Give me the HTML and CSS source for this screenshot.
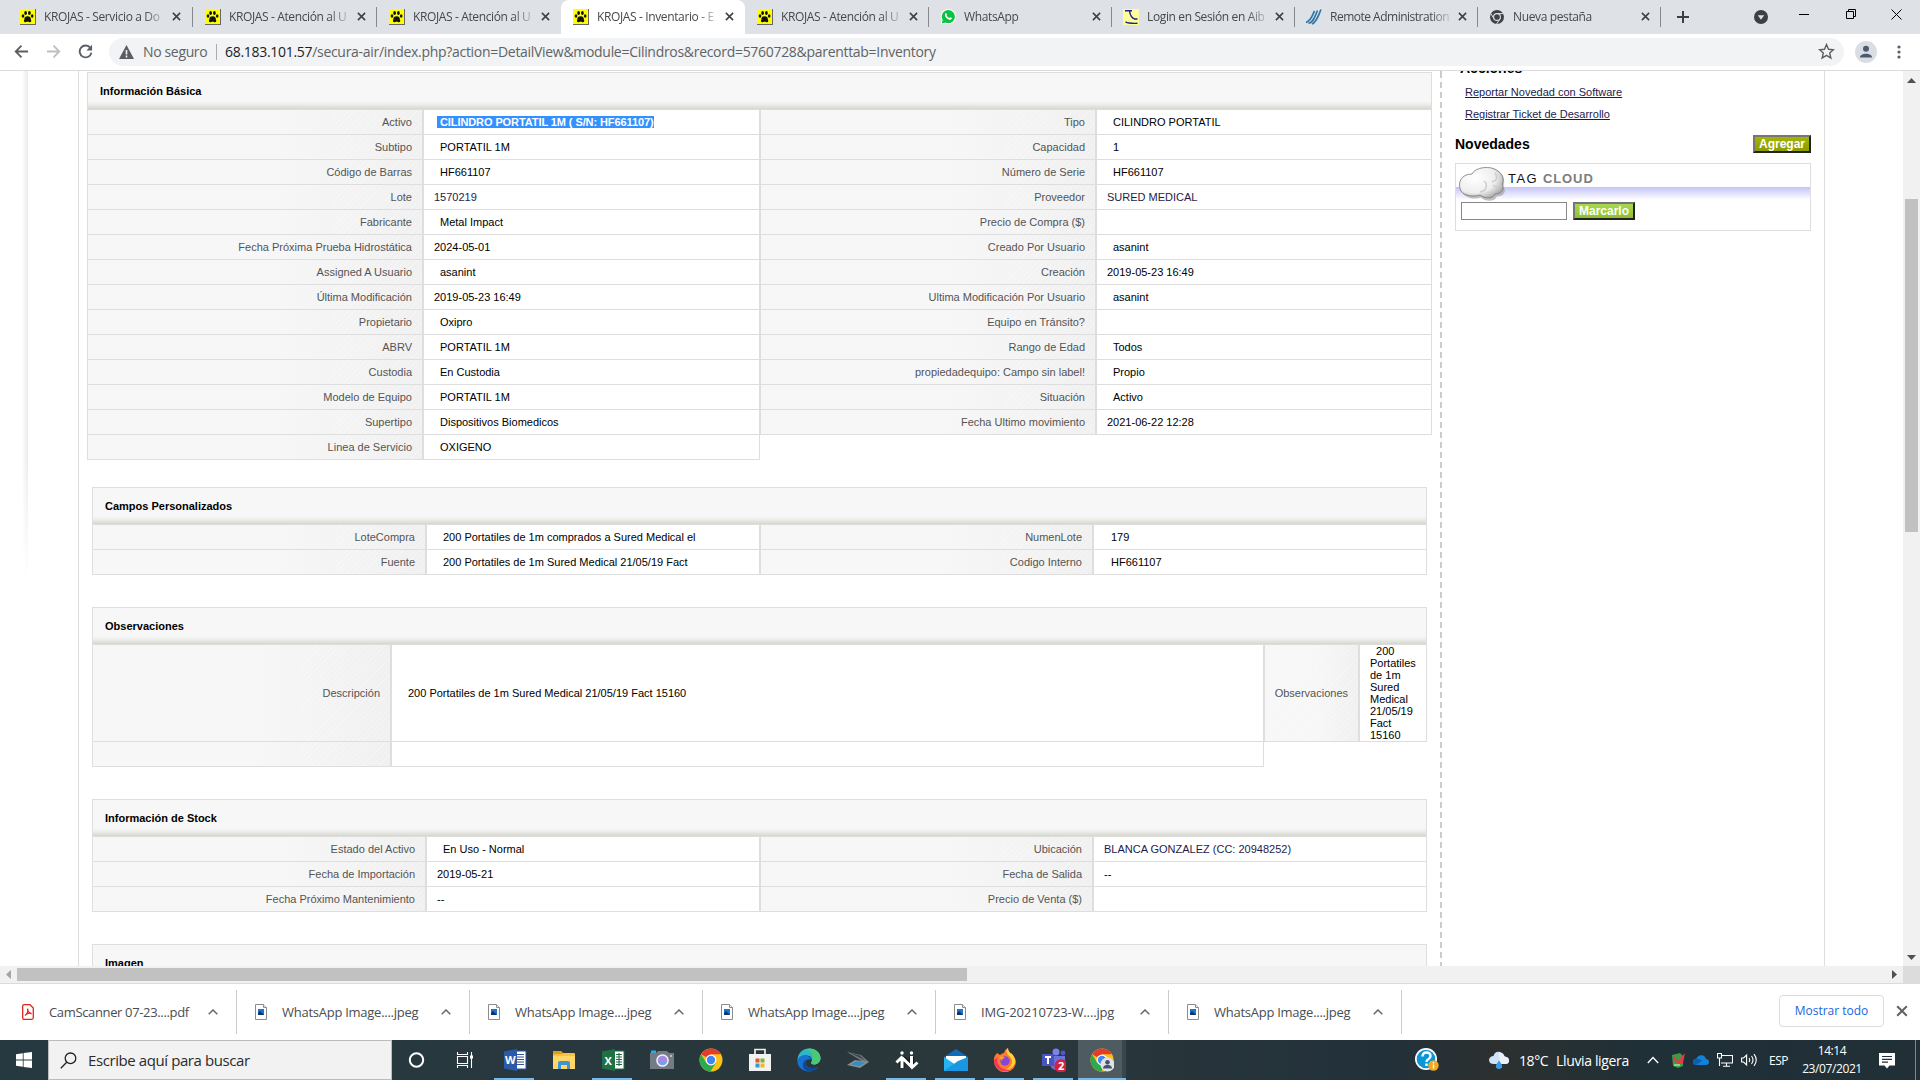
FILE: index.html
```html
<!DOCTYPE html>
<html lang="es">
<head>
<meta charset="utf-8">
<title>KROJAS - Inventario</title>
<link rel="stylesheet" href="styles.css">
</head>
<body>
<svg class="defs" width="0" height="0">
  <symbol id="paw" viewBox="0 0 16 16"><rect width="16" height="16" fill="#666"/><rect x="0" y="0" width="15" height="15" fill="#ff0"/><g fill="#111"><ellipse cx="7.6" cy="10" rx="3.2" ry="2.8"/><ellipse cx="5.6" cy="4" rx="1.4" ry="2"/><ellipse cx="9.4" cy="3.9" rx="1.4" ry="2"/><ellipse cx="3" cy="7" rx="1.3" ry="1.8"/><ellipse cx="12.2" cy="7" rx="1.3" ry="1.8"/><circle cx="5.4" cy="11.8" r="1.5"/><circle cx="9.8" cy="11.8" r="1.5"/></g></symbol>
  <symbol id="x" viewBox="0 0 10 10"><path d="M1 1l8 8M9 1l-8 8" stroke="currentColor" stroke-width="1.7" fill="none"/></symbol>
  <symbol id="up" viewBox="0 0 10 6"><path d="M.7 5.3L5 1l4.300 4.300" stroke="currentColor" stroke-width="1.600" fill="none"/></symbol>
  <symbol id="img" viewBox="0 0 12 16"><path d="M.5.5h8l3 3v12H.5z" fill="#fff" stroke="#8c8c8c"/><path d="M8.5.5v3h3" fill="#eee" stroke="#8c8c8c"/><rect x="3" y="5" width="6" height="6" fill="#1976d2"/><path d="M3 11V9l2-2 4 4z" fill="#0b3566"/></symbol>
  <symbol id="chrome" viewBox="0 0 24 24"><circle cx="12" cy="12" r="11.5" fill="#fbc116"/><path d="M12 12L2.1 6.2A11.5 11.5 0 0 1 22 6.3H12z" fill="#e33b2e"/><path d="M2.1 6.2A11.5 11.5 0 0 0 11.4 23.5L16.9 14.8 12 12 7.2 14.8z" fill="#2da94f"/><circle cx="12" cy="12" r="5.4" fill="#fff"/><circle cx="12" cy="12" r="4.2" fill="#4285f4"/></symbol>
</svg>

<header class="tabs">
  <div class="tab"><svg class="fav"><use href="#paw"/></svg><span class="tt">KROJAS - Servicio a Do</span><svg class="cl"><use href="#x"/></svg></div>
  <div class="tab"><svg class="fav"><use href="#paw"/></svg><span class="tt">KROJAS - Atención al U</span><svg class="cl"><use href="#x"/></svg></div>
  <div class="tab nosep"><svg class="fav"><use href="#paw"/></svg><span class="tt">KROJAS - Atención al U</span><svg class="cl"><use href="#x"/></svg></div>
  <div class="tab active"><svg class="fav"><use href="#paw"/></svg><span class="tt">KROJAS - Inventario - E</span><svg class="cl"><use href="#x"/></svg></div>
  <div class="tab"><svg class="fav"><use href="#paw"/></svg><span class="tt">KROJAS - Atención al U</span><svg class="cl"><use href="#x"/></svg></div>
  <div class="tab narrow"><svg class="fav" viewBox="0 0 16 16"><circle cx="8.3" cy="7.7" r="7.6" fill="#fff"/><path d="M.6 15.6l1-4 3 3z" fill="#fff"/><circle cx="8.3" cy="7.7" r="6.6" fill="#0cc143"/><path d="M1.8 14.4l1-3.6 2.6 2.6z" fill="#0cc143"/><path d="M5.2 4.6c.6-.8 1.3-.5 1.6.4.4 1 0 1.2-.2 1.6.7 1.3 1.7 2.1 2.8 2.4.6-.7.9-1 1.5-.6 1.3.6 1.2.9.7 1.7-.9 1.100-2.300 1-4 0C5.500 8.700 4.300 6.300 5.200 4.600z" fill="#fff"/></svg><span class="tt">WhatsApp</span><svg class="cl"><use href="#x"/></svg></div>
  <div class="tab narrow"><svg class="fav" viewBox="0 0 16 16"><rect width="16" height="16" fill="#ffff99"/><path d="M2 1.800h7M6.500 1.800c.5 4 2 7 5.500 8.400M11 10h3.500M2.500 12.800c2 1.200 7 1.700 12 1.500" stroke="#22228c" stroke-width="1.400" fill="none"/></svg><span class="tt">Login en Sesión en Aib</span><svg class="cl"><use href="#x"/></svg></div>
  <div class="tab narrow"><svg class="fav" viewBox="0 0 16 16"><path d="M0 13.500C5 12 6 7 8.500 2M2.500 14.500C8 13 9 7 11.500 1.500M6 15C11 13 12 7 15 .5" stroke="#2f78a8" stroke-width="1.700" fill="none"/></svg><span class="tt wide">Remote Administration</span><svg class="cl"><use href="#x"/></svg></div>
  <div class="tab narrow"><svg class="fav" viewBox="0 0 16 16"><circle cx="8" cy="8" r="7" fill="#3f4347"/><circle cx="8" cy="8" r="3.4" fill="none" stroke="#dee1e6" stroke-width="1.1"/><path d="M8 4.600h7M5 9.700L1.600 4.200M11 9.700L7.600 15" stroke="#dee1e6" stroke-width="1"/></svg><span class="tt">Nueva pestaña</span><svg class="cl"><use href="#x"/></svg></div>
  <svg class="plus" viewBox="0 0 14 14"><path d="M7 1v12M1 7h12" stroke="#3c4043" stroke-width="2"/></svg>
  <div class="wins">
    <svg width="14" height="14" viewBox="0 0 14 14"><circle cx="7" cy="7" r="7" fill="#3c4043"/><path d="M3.800 5.200h6.400L7 9.800z" fill="#dee1e6"/></svg>
    <svg width="10" height="10" viewBox="0 0 10 10"><path d="M0 4.500h10" stroke="#000"/></svg>
    <svg width="10" height="10" viewBox="0 0 10 10"><path d="M.5 2.500h7v7h-7zM2.500 2.500v-2h7v7h-2" fill="none" stroke="#000"/></svg>
    <svg width="11" height="11" viewBox="0 0 11 11"><path d="M.5.5l10 10M10.500.5l-10 10" stroke="#000"/></svg>
  </div>
</header>

<div class="toolbar">
  <svg class="nav" viewBox="0 0 16 16"><path d="M15 8H2M8 1.800L1.800 8 8 14.200" stroke="#5a5e63" stroke-width="1.900" fill="none"/></svg>
  <svg class="nav" viewBox="0 0 16 16"><path d="M1 8h13M8 1.800L14.200 8 8 14.200" stroke="#bcbfc3" stroke-width="1.900" fill="none"/></svg>
  <svg class="nav" viewBox="0 0 16 16"><path d="M13.200 4.200A6.300 6.300 0 1 0 14.300 9.200" stroke="#5a5e63" stroke-width="2" fill="none"/><path d="M15 .8v6H9z" fill="#5a5e63"/></svg>
  <div class="omni">
    <svg width="15" height="14" viewBox="0 0 15 14"><path d="M7.500 0L15 14H0z" fill="#5a5e63"/><path d="M7.500 5v4.500M7.500 10.500v2" stroke="#f1f3f4" stroke-width="1.600"/></svg>
    <span class="ns">No seguro</span><i></i><span class="url"><b>68.183.101.57</b>/secura-air/index.php?action=DetailView&amp;module=Cilindros&amp;record=5760728&amp;parenttab=Inventory</span>
    <svg class="star" viewBox="0 0 16 16"><path d="M8 1.500l1.900 4.400 4.700.4-3.600 3.100 1.100 4.700L8 11.600l-4.100 2.500L5 9.400 1.400 6.300l4.700-.4z" fill="none" stroke="#5a5e63" stroke-width="1.300"/></svg>
  </div>
  <svg class="prof" viewBox="0 0 22 22"><circle cx="11" cy="11" r="11" fill="#dadee3"/><circle cx="11" cy="7.800" r="3" fill="#4a5a70"/><path d="M5 16.500c0-5 12-5 12 0z" fill="#4a5a70"/></svg>
  <svg class="dots" viewBox="0 0 4 14"><g fill="#5a5e63"><circle cx="2" cy="2" r="1.600"/><circle cx="2" cy="7" r="1.600"/><circle cx="2" cy="12" r="1.600"/></g></svg>
</div>

<main class="view">
  <div class="gutter"></div>
  <div class="page">
    <div class="detail">
      <section class="blk first">
        <h2>Información Básica</h2>
        <div class="row"><div class="l">Activo</div><div class="v"><b class="sel">&nbsp;CILINDRO PORTATIL 1M ( S/N: HF661107)</b></div><div class="l">Tipo</div><div class="v p">CILINDRO PORTATIL</div></div>
        <div class="row"><div class="l">Subtipo</div><div class="v p">PORTATIL 1M</div><div class="l">Capacidad</div><div class="v p">1</div></div>
        <div class="row"><div class="l">Código de Barras</div><div class="v p">HF661107</div><div class="l">Número de Serie</div><div class="v p">HF661107</div></div>
        <div class="row"><div class="l">Lote</div><div class="v a">1570219</div><div class="l">Proveedor</div><div class="v a">SURED MEDICAL</div></div>
        <div class="row"><div class="l">Fabricante</div><div class="v p">Metal Impact</div><div class="l">Precio de Compra ($)</div><div class="v"></div></div>
        <div class="row"><div class="l">Fecha Próxima Prueba Hidrostática</div><div class="v">2024-05-01</div><div class="l">Creado Por Usuario</div><div class="v p">asanint</div></div>
        <div class="row"><div class="l">Assigned A Usuario</div><div class="v p">asanint</div><div class="l">Creación</div><div class="v">2019-05-23 16:49</div></div>
        <div class="row"><div class="l">Última Modificación</div><div class="v">2019-05-23 16:49</div><div class="l">Ultima Modificación Por Usuario</div><div class="v p">asanint</div></div>
        <div class="row"><div class="l">Propietario</div><div class="v p">Oxipro</div><div class="l">Equipo en Tránsito?</div><div class="v"></div></div>
        <div class="row"><div class="l">ABRV</div><div class="v p">PORTATIL 1M</div><div class="l">Rango de Edad</div><div class="v p">Todos</div></div>
        <div class="row"><div class="l">Custodia</div><div class="v p">En Custodia</div><div class="l">propiedadequipo: Campo sin label!</div><div class="v p">Propio</div></div>
        <div class="row"><div class="l">Modelo de Equipo</div><div class="v p">PORTATIL 1M</div><div class="l">Situación</div><div class="v p">Activo</div></div>
        <div class="row"><div class="l">Supertipo</div><div class="v p">Dispositivos Biomedicos</div><div class="l">Fecha Ultimo movimiento</div><div class="v">2021-06-22 12:28</div></div>
        <div class="row"><div class="l">Linea de Servicio</div><div class="v p">OXIGENO</div></div>
      </section>
      <section class="blk custom">
        <h2>Campos Personalizados</h2>
        <div class="row"><div class="l">LoteCompra</div><div class="v p">200 Portatiles de 1m comprados a Sured Medical el</div><div class="l">NumenLote</div><div class="v p">179</div></div>
        <div class="row"><div class="l">Fuente</div><div class="v p">200 Portatiles de 1m Sured Medical 21/05/19 Fact</div><div class="l">Codigo Interno</div><div class="v p">HF661107</div></div>
      </section>
      <section class="blk obs">
        <h2>Observaciones</h2>
        <div class="row tall"><div class="l">Descripción</div><div class="v p">200 Portatiles de 1m Sured Medical 21/05/19 Fact 15160</div><div class="l">Observaciones</div><div class="v"><p>&nbsp; 200<br>Portatiles<br>de 1m<br>Sured<br>Medical<br>21/05/19<br>Fact<br>15160</p></div></div>
        <div class="row"><div class="l"></div><div class="v"></div></div>
      </section>
      <section class="blk stock">
        <h2>Información de Stock</h2>
        <div class="row"><div class="l">Estado del Activo</div><div class="v p">En Uso - Normal</div><div class="l">Ubicación</div><div class="v a">BLANCA GONZALEZ (CC: 20948252)</div></div>
        <div class="row"><div class="l">Fecha de Importación</div><div class="v">2019-05-21</div><div class="l">Fecha de Salida</div><div class="v">--</div></div>
        <div class="row"><div class="l">Fecha Próximo Mantenimiento</div><div class="v">--</div><div class="l">Precio de Venta ($)</div><div class="v"></div></div>
      </section>
      <section class="blk image"><h2>Imagen</h2></section>
    </div>
    <div class="dash"></div>
    <aside>
      <h3 class="acc">Acciones</h3>
      <a>Reportar Novedad con Software</a>
      <a>Registrar Ticket de Desarrollo</a>
      <div class="nov"><h3>Novedades</h3><button class="olive">Agregar</button></div>
      <div class="cloud">
        <div class="ch">
          <svg width="48" height="34" viewBox="0 0 48 34"><defs><radialGradient id="cg" cx=".35" cy=".35" r=".8"><stop offset="0" stop-color="#fff"/><stop offset=".6" stop-color="#eee"/><stop offset="1" stop-color="#999"/></radialGradient></defs><path d="M4 25C-1 17 3 8 14 8 17 1 33-2 40 4 46 8 46 15 44 18 48 22 45 28 38 28 36 33 27 34 22 29 16 31 7 30 4 25z" fill="#999" transform="translate(1 1.500)" opacity=".6"/><path d="M3 24C-1 16 3 7 14 7 17 0 33-2 40 4 46 8 46 14 44 17 47 21 44 27 37 27 35 32 27 32 22 28 16 30 6 29 3 24z" fill="url(#cg)" stroke="#777" stroke-width=".8"/><path d="M22 25c7-1 8-8 4-11M37 6c3 4 2 8-3 9M35 18c3 3 6 2 7 0" stroke="#ccc" stroke-width="1.500" fill="none"/></svg>
          <span>TAG</span><b>CLOUD</b>
        </div>
        <div class="cf"><input type="text"><button class="lime">Marcarlo</button></div>
      </div>
    </aside>
  </div>
  <div class="vs"><svg width="9" height="5"><path d="M0 5l4.500-5L9 5z" fill="#505050"/></svg><div class="thumb"></div><svg class="dn" width="9" height="5"><path d="M0 0l4.500 5L9 0z" fill="#505050"/></svg></div>
</main>
<div class="hs"><svg width="5" height="9"><path d="M5 0L0 4.500 5 9z" fill="#a3a3a3"/></svg><div class="ht"></div><svg class="rt" width="5" height="9"><path d="M0 0l5 4.500L0 9z" fill="#505050"/></svg><div class="corner"></div></div>

<div class="dl">
  <div class="di"><svg class="pdf" viewBox="0 0 12 16"><path d="M.7 2.200Q.7.700 2.200.700H8l3.300 3.300v9.800q0 1.500-1.500 1.500H2.200q-1.500 0-1.500-1.500z" fill="#fff" stroke="#e0251b" stroke-width="1.300"/><path d="M3 11.500C5 10 6.500 7 5.800 5.200 5 4 5.400 8.500 9 9.800 10 8.500 5 9 3 11.500z" stroke="#e0251b" stroke-width="1.200" fill="none"/></svg><span>CamScanner 07-23....pdf</span><svg class="up"><use href="#up"/></svg></div>
  <div class="di"><svg><use href="#img"/></svg><span>WhatsApp Image....jpeg</span><svg class="up"><use href="#up"/></svg></div>
  <div class="di"><svg><use href="#img"/></svg><span>WhatsApp Image....jpeg</span><svg class="up"><use href="#up"/></svg></div>
  <div class="di"><svg><use href="#img"/></svg><span>WhatsApp Image....jpeg</span><svg class="up"><use href="#up"/></svg></div>
  <div class="di"><svg><use href="#img"/></svg><span class="w">IMG-20210723-W....jpg</span><svg class="up"><use href="#up"/></svg></div>
  <div class="di"><svg><use href="#img"/></svg><span>WhatsApp Image....jpeg</span><svg class="up"><use href="#up"/></svg></div>
  <div class="all">Mostrar todo</div>
  <svg class="dx"><use href="#x"/></svg>
</div>

<footer class="bar">
  <div class="start"><svg width="16" height="16" viewBox="0 0 16 16"><path d="M0 2.200L6.800 1.200V7.600H0zM7.600 1.100L16 0v7.600H7.600zM0 8.400h6.800v6.400L0 13.800zM7.600 8.400H16V16l-8.400-1.100z" fill="#fff"/></svg></div>
  <div class="search"><svg width="17" height="17" viewBox="0 0 17 17"><circle cx="10.500" cy="6.300" r="5.300" fill="none" stroke="#222" stroke-width="1.300"/><path d="M6.700 10.200L.8 16.200" stroke="#222" stroke-width="1.300"/></svg><span>Escribe aquí para buscar</span></div>
  <div class="apps">
    <div class="app"><svg viewBox="0 0 24 24"><circle cx="11.500" cy="12" r="6.700" fill="none" stroke="#fff" stroke-width="2"/></svg></div>
    <div class="app"><svg viewBox="0 0 24 24"><path d="M3.500 8.500h10v7h-10zM3.500 4v2.500h10V4M3.500 20v-2.500h10V20M17.500 4v16" fill="none" stroke="#fff" stroke-width="1.100"/><path d="M16 7.500h3v3h-3z" fill="#fff"/></svg></div>
    <div class="app on"><svg viewBox="0 0 24 24"><rect x="11" y="3" width="12" height="18" fill="#fff" stroke="#2b5797"/><path d="M14 6.500h7M14 9h7M14 11.500h7M14 14h7M14 16.500h7" stroke="#2b5797" stroke-width="1.200"/><path d="M1 3.500L14 1v22L1 20.500z" fill="#2b5ba8"/><text x="2" y="16" class="ic">W</text></svg></div>
    <div class="app"><svg viewBox="0 0 24 24"><path d="M1 4q0-1 1-1h7l2 2h11q1 0 1 1v14H1z" fill="#f5c242"/><path d="M1 8h22v13H1z" fill="#ffd766"/><path d="M1 4q0-1 1-1h7l2 3H1z" fill="#e39b17"/><path d="M6 21v-6q0-2 2-2h8q2 0 2 2v6h-3v-4H9v4z" fill="#3f94d9"/></svg></div>
    <div class="app on"><svg viewBox="0 0 24 24"><rect x="11" y="3" width="12" height="18" fill="#fff" stroke="#1d6f42"/><path d="M15 6.500h6M15 9h6M15 11.500h6M15 14h6M15 16.500h6M18 5v13" stroke="#1d6f42" stroke-width="1.100"/><path d="M1 3.500L14 1v22L1 20.500z" fill="#1e7145"/><text x="3.500" y="16.500" class="ic">X</text></svg></div>
    <div class="app"><svg viewBox="0 0 24 24"><path d="M0 5h6l2-2h9l2 2h5v16H0z" fill="#737b84"/><path d="M1 2.500h5V5H1z" fill="#2fa7e8"/><circle cx="12.500" cy="12.500" r="6.300" fill="#f3f3f8"/><circle cx="12.500" cy="12.500" r="4.800" fill="#a78be0"/><path d="M8 13a4.800 4.800 0 0 0 9 1z" fill="#63a9e8"/><circle cx="21" cy="8" r=".9" fill="#ddd"/></svg></div>
    <div class="app"><svg viewBox="0 0 24 24"><use href="#chrome"/></svg></div>
    <div class="app"><svg viewBox="0 0 24 24"><path d="M7 7V1.500h10V7" stroke="#eee" stroke-width="1.700" fill="none"/><path d="M1 6h22v17H1z" fill="#f2f2f2"/><path d="M7.500 10.500h4v4h-4z" fill="#e8542c"/><path d="M12.500 10.500h4v4h-4z" fill="#7db72f"/><path d="M7.500 15.500h4v4h-4z" fill="#2f9fdc"/><path d="M12.500 15.500h4v4h-4z" fill="#f7b71d"/></svg></div>
    <div class="app"><svg viewBox="0 0 24 24"><path d="M.5 11C1.500 3.500 7 .5 12.500.5 19 .5 23.500 5 23.500 10c0 4-3 6.500-6.500 6.500-2.500 0-3.500-1-2.500-2.500C16 11 14 7.500 9.500 7.500 5.500 7.500 2 9 .5 13z" fill="#2fb5c8"/><path d="M12.500.5C19 .5 23.500 5 23.500 10c0 4-3 6.500-6.500 6.500-2.500 0-3.500-1-2.500-2.500C17 9 16 4 9 1z" fill="#4cca72"/><path d="M.5 13C1 9 5 6.500 9.500 7.500c3 .5 5 3 5 5C14 10.500 8.500 10.500 8.500 15c0 4 6 6.500 12.500 4C18.500 22 15 23.500 12 23.500 5 23.500 0 18 .5 13z" fill="#1673cf"/><path d="M8.500 15c0 4 6 6.500 12.500 4-2.500 3-6 4.500-8.500 4.500C7.500 23 5 19 6 15.500c.6-2 2-3.500 4-4-1 .8-1.500 2-1.500 3.500z" fill="#0d4a97"/></svg></div>
    <div class="app"><svg viewBox="0 0 24 24"><path d="M1 4l14 3 8 7-4 1z" fill="#767b7e"/><path d="M4 5l10 2.500 5 5z" fill="#3d4549"/><path d="M1 17l8-5 14 2-9 6z" fill="#888d90"/><path d="M5 16.500l5-3 9 1-5 3.500z" fill="#2d8fc5"/></svg></div>
    <div class="app on"><svg viewBox="0 0 24 24"><g stroke="#000" stroke-width="5" fill="none" opacity=".6"><path d="M7 11v9M16.500 9v9M8 10l9 9"/></g><g stroke="#fff" stroke-width="3" fill="none"><path d="M1.500 14.500L6.500 9.500l3 3M7 10v10M22.500 14.500L17 19.500l-4-4M16.500 8v10M7.500 10l9 9"/></g><circle cx="7" cy="5" r="1.700" fill="#fff"/><circle cx="16.500" cy="5" r="1.700" fill="#fff"/></svg></div>
    <div class="app on"><svg viewBox="0 0 24 24"><path d="M0 9L12 1l12 8v14H0z" fill="#0f6cbd"/><path d="M2 8h20v8H2z" fill="#fff"/><path d="M0 9l12 8L24 9v14H0z" fill="#27b3f0"/><path d="M0 23l14-10 10-4v14z" fill="#1b96e0"/></svg></div>
    <div class="app on"><svg viewBox="0 0 24 24"><path d="M4 5l3 2q2-2 4-2 1-4 4-5 0 4 4 6 5 5 3.500 10.500A11 11 0 0 1 1 13Q0 9 4 5z" fill="#ff7a2c"/><path d="M15 0q0 4 4 6 4 5 3 9-3 7-10 7 8-4 7-10-1-3-4-5-3-4 0-7z" fill="#ffd23a"/><path d="M1 12a11 11 0 0 0 16 10Q8 22 5 16 3 12 5 9z" fill="#f0365c"/><circle cx="12" cy="13" r="4.700" fill="#8646d8"/><path d="M6 9q4-2 6 1-3 0-3 3z" fill="#ff9c2e"/></svg></div>
    <div class="app on"><svg viewBox="0 0 24 24"><circle cx="14" cy="4" r="3.500" fill="#7b83eb"/><circle cx="21" cy="5" r="2.400" fill="#5059c9"/><path d="M8 8h15v8q-2 6-8 6-6 0-7-6z" fill="#6a72dc"/><path d="M0 6h12v12H0z" fill="#4b53bc"/><path d="M3 9h6M6 9v7" stroke="#fff" stroke-width="2"/><circle cx="19" cy="18" r="6.700" fill="#d3213e"/><text x="16" y="22.300" class="ic n">2</text></svg></div>
    <div class="app on cur"><svg viewBox="0 0 24 24"><use href="#chrome"/><circle cx="17.500" cy="16.500" r="7" fill="#dfe3e8"/><circle cx="17.500" cy="14.200" r="2.300" fill="#44546a"/><path d="M13 20.500c0-5 9-5 9 0z" fill="#44546a"/></svg></div>
  </div>
  <div class="tray">
    <svg class="help" viewBox="0 0 24 24"><circle cx="11" cy="11" r="11" fill="#fff"/><circle cx="11" cy="11" r="9.300" fill="#0b96d6"/><path d="M7.500 8.500q0-4 4-4t4 3.500q0 2-2.200 3.300Q11.500 12.300 11.500 14M11.500 15.500v2.500" stroke="#fff" stroke-width="2.400" fill="none"/><circle cx="18.500" cy="17.500" r="5.200" fill="#f5a81c"/><path d="M18.500 14v1.500M18.500 16.500v4" stroke="#fff" stroke-width="1.500"/></svg>
    <svg class="wx" viewBox="0 0 20 20"><path d="M5 14Q0 14 0 9.500 1 6 4.500 6 6 1 11 2q4 1 4.500 4.500Q20 7 20 10.500q0 3.500-4 3.500z" fill="#cfe3f7"/><path d="M10 2.500Q14 3 15.500 6.500 20 7 20 10.500q0 3.500-4 3.500h-5z" fill="#e9f2fb"/><path d="M10 10.500q4 5 3 7-3 3-6 0-1-2 3-7z" fill="#3c9ae8"/></svg>
    <span class="temp">18°C</span><span class="rain">Lluvia ligera</span>
    <svg class="chev" viewBox="0 0 12 8"><path d="M.8 7L6 1.500 11.200 7" stroke="#fff" stroke-width="1.300" fill="none"/></svg>
    <svg class="bug" viewBox="0 0 14 16"><path d="M1 3l8-2 3 3v10l-5 2-5-2z" fill="#3f9a45"/><path d="M2 3l5 6 7-8-2 10-5 1-4-4z" fill="#e23b4b"/><path d="M3 12h6v2H3z" fill="#8fce8a"/></svg>
    <svg class="od" viewBox="0 0 16 10"><path d="M3.500 10Q0 10 0 7t3.300-3.200Q5 0 8.500.2T13 4q3 .3 3 3t-3 3z" fill="#1480d8"/><path d="M3.300 3.800Q6 3 9 6l-6 4Q0 10 0 7 0 4 3.300 3.800z" fill="#0b5fae"/></svg>
    <svg class="net" viewBox="0 0 16 14"><path d="M4 2.500h11.500v7.500H4M9.500 10v3M6 13.200h7M2.500 5.500V13M.5.500h4v4.500h-4z" fill="none" stroke="#fff" stroke-width="1.100"/></svg>
    <svg class="snd" viewBox="0 0 17 14"><path d="M.6 5v4h2l3 3V2l-3 3zM8 5q1.500 2 0 4M10.500 3q3 4 0 8M13 1.200q4.500 5.800 0 11.600" fill="none" stroke="#fff" stroke-width="1.100"/></svg>
    <span class="esp">ESP</span>
    <div class="clock">14:14<br>23/07/2021</div>
    <svg class="note" viewBox="0 0 16 16"><path d="M0 0h16v12.500h-5.500L8 15.500l-2.500-3H0z" fill="#fff"/><path d="M3 3.500h10M3 6.300h10M3 9.100h6" stroke="#222f36" stroke-width="1.200"/></svg>
    <i></i>
  </div>
</footer>
</body>
</html>
```
FILE: styles.css
```css
* { box-sizing: border-box; }
body { margin: 0; width: 1920px; height: 1080px; overflow: hidden; background: #fff; font-family: "Open Sans", "Noto Sans", sans-serif; display: flex; flex-direction: column; }
svg { display: block; flex: none; }
.defs { position: absolute; }

/* browser chrome */
.tabs { height: 34px; flex: none; background: #dee1e6; display: flex; align-items: stretch; }
.tab { width: 184px; height: 34px; padding: 0 0 1px 12px; display: flex; align-items: center; position: relative; color: #45494d; }
.tab:first-child { width: 193px; padding-left: 20px; }
.tab.narrow { width: 183px; padding-left: 11px; }
.tab::after { content: ""; position: absolute; right: 0; top: 7px; height: 20px; width: 1px; background: #85888c; }
.tab.active::after, .tab.nosep::after { display: none; }
.tab.active { background: #fff; border-radius: 8px 8px 0 0; }
.fav { width: 16px; height: 16px; margin-right: 8px; }
.tt { width: 123px; font-size: 12px; letter-spacing: -.37px; white-space: nowrap; -webkit-mask-image: linear-gradient(90deg, #000 100px, transparent 124px); mask-image: linear-gradient(90deg, #000 100px, transparent 124px); }
.tt.wide { letter-spacing: -.5px; }
.cl { width: 9px; height: 9px; margin-left: 5px; color: #3c4043; }
.plus { width: 14px; height: 14px; margin: 10px 0 0 15px; }
.wins { margin-left: auto; display: flex; padding: 8px 18px 0 0; }
.wins svg:nth-child(1) { margin: 2px 31px 0 0; }
.wins svg:nth-child(2) { margin: 2px 37px 0 0; }
.wins svg:nth-child(3) { margin: 1px 35px 0 0; }
.wins svg:nth-child(4) { margin-top: 1px; }
.toolbar { height: 37px; flex: none; border-bottom: 1px solid #d9dbde; display: flex; align-items: center; padding: 0 0 1px 14px; }
.nav { width: 15px; height: 15px; margin-right: 17px; }
.omni { width: 1735px; height: 28px; margin-left: -1px; border-radius: 14px; background: #f1f3f4; display: flex; align-items: center; padding-left: 10px; font-size: 14px; color: #5f6368; }
.omni .ns { margin-left: 9px; letter-spacing: -.35px; width: 66px; white-space: nowrap; }
.omni i { width: 1px; height: 16px; background: #a9acb0; margin: 0 8px 0 7px; }
.url { letter-spacing: -.3px; white-space: nowrap; }
.url b { font-weight: 400; color: #202124; }
.star { width: 17px; height: 17px; margin: 0 9px 0 auto; }
.prof { width: 22px; height: 22px; margin-left: 11px; }
.dots { width: 4px; height: 14px; margin-left: 20px; }

/* page */
.view { height: 895px; flex: none; display: flex; overflow: hidden; font-family: "Liberation Sans", Arial, sans-serif; font-size: 11px; background: #fff; }
.gutter { width: 78px; background: linear-gradient(90deg, #fff 0, #e9e9e9 6px, #fff 6px) 22px 0 / 8px 510px no-repeat; -webkit-mask-image: linear-gradient(#000 380px, transparent 510px); mask-image: linear-gradient(#000 380px, transparent 510px); }
.page { width: 1747px; border-left: 1px solid #dedede; border-right: 1px solid #dedede; display: flex; }
.detail { width: 1361px; padding: 1px 0 0 8px; }
.dash { width: 2px; background: repeating-linear-gradient(#ccc 0 6px, transparent 6px 10px) 0 1px; }
.blk { margin-left: 5px; width: 1335px; --c: 334px 334px 333px 334px; }
.blk.first { margin-left: 0; width: 1345px; --c: 336px 337px 336px 336px; }
.blk.custom { margin-top: 27px; }
.blk.obs { margin-top: 32px; --c: 299px 873px 95px 68px; }
.blk.stock { margin-top: 32px; }
.blk.image { margin-top: 32px; }
.blk h2 { margin: 0; height: 38px; padding: 0 0 0 12px; border: 1px solid #dedede; border-bottom-color: #dcddd8; background: linear-gradient(#f7f7f7 0 28px, #eff0ec 31px, #d6d7d0 36px); font-size: 11px; line-height: 36px; color: #000; }
.row { display: grid; grid-template-columns: var(--c); height: 25px; }
.row.tall { height: 97px; }
.row > div { border: solid #dedede; border-width: 0 1px 1px; display: flex; align-items: center; white-space: nowrap; }
.l { justify-content: flex-end; padding-right: 10px; color: #545454; background: repeating-linear-gradient(135deg, rgba(255,255,255,.25) 0 1px, transparent 1px 4px) right / 90px 100% no-repeat, linear-gradient(90deg, #f7f7f7 55%, #f0f0f0); }
.v { padding-left: 10px; color: #000; }
.v.p { padding-left: 16px; }
.custom .v.p:nth-child(4) { padding-left: 17px; }
.v.a { color: #1c1c4c; }
.v p { margin: 0; line-height: 12px; }
.sel { background: #3390ff; color: #fff; margin-left: 3px; letter-spacing: -.09px; line-height: 12px; }

aside { padding-left: 13px; }
aside h3 { margin: 0; font-size: 14px; line-height: 16px; color: #000; }
aside .acc { margin: -11px 0 8px 5px; }
aside a { display: block; margin-left: 10px; line-height: 16px; margin-bottom: 6px; text-decoration: underline; color: #1c1c4c; }
.nov { width: 356px; display: flex; justify-content: space-between; align-items: center; margin-top: 13px; height: 18px; }
button { font: bold 12px "Liberation Sans", Arial, sans-serif; color: #fff; height: 18px; padding: 0; border: 2px solid; border-color: #767676 #222 #222 #767676; }
.olive { width: 58px; background: linear-gradient(#a5b400, #8d9c00); }
.lime { width: 62px; background: linear-gradient(#a8d850, #8fbf30); }
.cloud { width: 356px; height: 68px; margin-top: 10px; border: 1px solid #dedede; }
.ch { height: 37px; display: flex; align-items: flex-start; padding: 3px 0 0 2px; background: linear-gradient(#fff 0 23px, #c4c4f9 23px, #fff 36px); font-size: 13px; line-height: 24px; color: #111; }
.ch span { margin: 0 5px 0 2px; letter-spacing: 1.400px; }
.ch b { color: #7d7d7d; letter-spacing: .9px; }
.cf { display: flex; padding: 1px 0 0 5px; gap: 6px; }
.cf input { width: 106px; height: 18px; border: 1px solid #888; padding: 0; }

.vs { width: 17px; margin-left: auto; background: #f1f1f1; display: flex; flex-direction: column; align-items: center; padding-top: 7px; }
.thumb { width: 13px; height: 333px; margin-top: 116px; background: #c1c1c1; }
.vs .dn { margin: auto 0 6px; }
.hs { height: 18px; flex: none; background: #f1f1f1; border-bottom: 1px solid #d9dbde; display: flex; align-items: center; padding-left: 6px; }
.ht { width: 950px; height: 13px; margin-left: 6px; background: #c1c1c1; }
.rt { margin: 0 6px 0 auto; }
.corner { width: 17px; height: 17px; background: #dcdcdc; }

/* downloads shelf */
.dl { height: 56px; flex: none; display: flex; align-items: center; font-size: 13px; color: #4a4d51; }
.di { width: 233px; height: 44px; display: flex; align-items: center; padding-left: 22px; border-right: 1px solid #ccc; }
.di:first-child { width: 237px; }
.di:first-child span { letter-spacing: -.35px; }
.di svg { width: 12px; height: 16px; }
.di:not(:first-child) { padding-left: 18px; }
.di span { margin-left: 15px; width: 158px; letter-spacing: -.26px; white-space: nowrap; }
.di span.w { letter-spacing: -.16px; }
.di .up { width: 10px; height: 6px; color: #6a6e72; margin-left: 1px; }
.all { margin-left: auto; width: 105px; height: 32px; margin-bottom: 2px; border: 1px solid #dadce0; border-radius: 4px; color: #1a64e0; font-size: 12px; line-height: 30px; text-align: center; }
.dx { width: 12px; height: 12px; margin: 0 12px 2px; color: #5f6368; }

/* taskbar */
.bar { height: 40px; flex: none; display: flex; background: linear-gradient(90deg, #263840, #2a373b 55%, #22303a 72%, #2c302f 78%, #1f3038 86%, #222f36); color: #fff; }
.start { width: 48px; padding: 12px 0 0 16px; }
.search { width: 344px; background: #f2f2f2; border: 1px solid #bbb; display: flex; align-items: center; padding-left: 11px; color: #2b2b2b; font-size: 15px; letter-spacing: -.41px; }
.search span { margin-left: 11px; }
.apps { display: flex; }
.app { width: 49px; height: 40px; display: flex; align-items: center; justify-content: center; position: relative; }
.app svg { width: 24px; height: 24px; }
.app.on::after { content: ""; position: absolute; left: 4px; right: 5px; bottom: 0; height: 2px; background: #76b9ed; }
.app.cur { width: 48px; background: linear-gradient(90deg, #4e5b60 44px, #39474d 44px); }
.app.cur::after { left: 0; right: 0; }
.ic { font: bold 11px "Open Sans", sans-serif; fill: #fff; }
.tray { margin-left: auto; display: flex; align-items: center; font-size: 14px; white-space: nowrap; }
.tray .help { width: 24px; height: 24px; margin-right: 50px; }
.wx { width: 20px; height: 20px; margin-right: 10px; }
.temp { width: 37px; letter-spacing: -.4px; }
.rain { width: 78px; letter-spacing: -.35px; }
.chev { width: 12px; height: 8px; margin: 0 12px 0 13px; }
.bug { width: 14px; height: 16px; margin-right: 8px; }
.od { width: 16px; height: 10px; margin-right: 8px; }
.net { width: 16px; height: 14px; margin-right: 8px; }
.snd { width: 17px; height: 14px; margin-right: 11px; }
.esp { font-size: 12px; letter-spacing: -.5px; width: 20px; }
.clock { width: 86px; text-align: center; font-size: 12px; letter-spacing: -.4px; line-height: 18px; }
.note { width: 16px; height: 16px; margin: 2px 20px 0 4px; }
.tray i { width: 1px; height: 40px; background: #7d868a; margin-right: 4px; }
```
